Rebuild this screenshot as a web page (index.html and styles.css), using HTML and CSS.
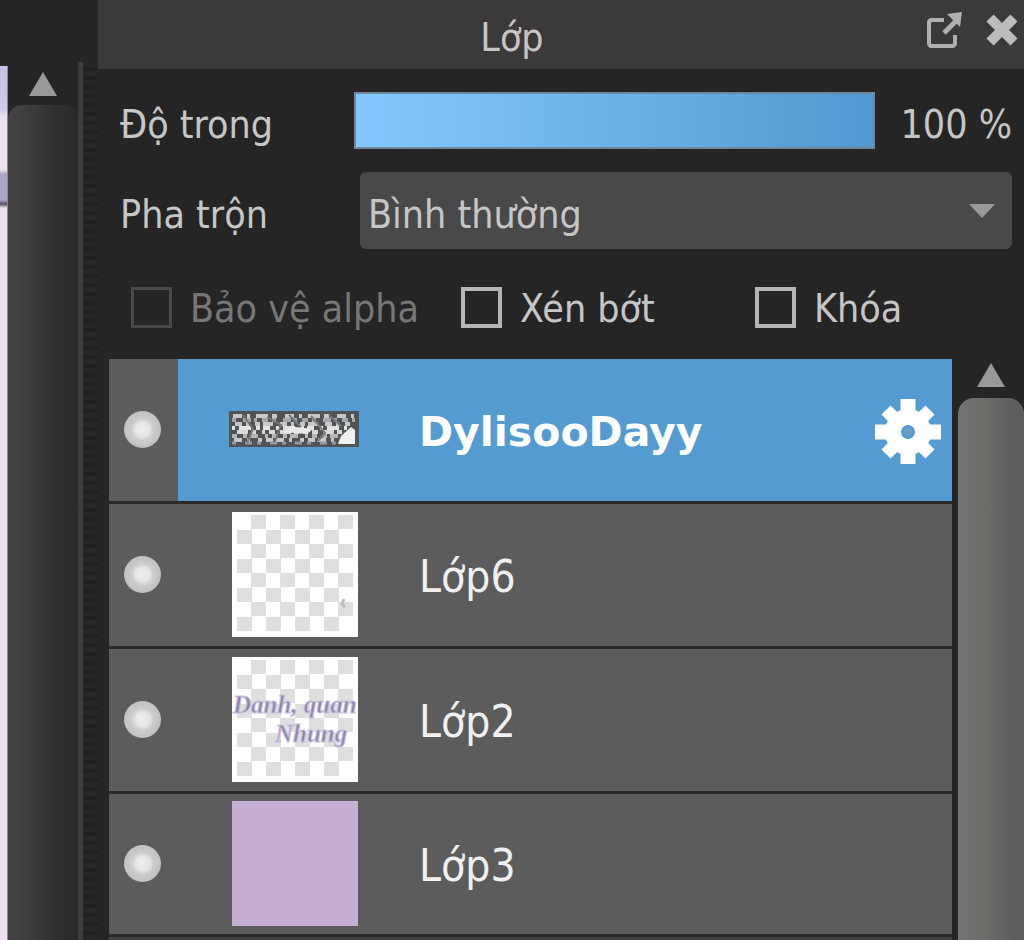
FILE: index.html
```html
<!DOCTYPE html>
<html lang="vi">
<head>
    <meta charset="UTF-8" />
    <meta name="viewport" content="width=device-width, initial-scale=1" />
    <title>Lớp</title>
    <link rel="stylesheet" href="styles.css">
</head>
<body>
<div class="side">
    <div class="canvas-edge"></div>
    <div class="scrollbar dark">
        <span class="arrow-up"></span>
        <div class="thumb"></div>
    </div>
</div>
<div class="splitter"></div>

<main class="panel">
    <header class="panel-header">
        <h1>Lớp</h1>
        <div class="header-buttons">
            <button type="button" class="icon-btn" aria-label="Tách cửa sổ">
                <svg width="40" height="40" viewBox="0 0 40 40">
                    <path d="M20 10 H8 Q5 10 5 13 V33 Q5 36 8 36 H28 Q31 36 31 33 V25" fill="none" stroke="#b0b0b0" stroke-width="4"/>
                    <path d="M20 23 L32 11" stroke="#b0b0b0" stroke-width="5"/>
                    <path d="M23 4 L38 2 L36 17 Z" fill="#b0b0b0"/>
                </svg>
            </button>
            <button type="button" class="icon-btn" aria-label="Đóng">
                <svg width="36" height="40" viewBox="0 0 36 40">
                    <path d="M6 8 L30 32 M30 8 L6 32" stroke="#bcbcbc" stroke-width="10"/>
                </svg>
            </button>
        </div>
    </header>

    <div class="field">
        <label for="opacity">Độ trong</label>
        <input type="range" id="opacity" min="0" max="100" value="100">
        <output for="opacity">100 %</output>
    </div>
    <div class="field">
        <label for="blend">Pha trộn</label>
        <div class="select-wrap">
            <select id="blend">
                <option>Bình thường</option>
            </select>
        </div>
    </div>

    <div class="checks">
        <label class="check disabled"><input type="checkbox" disabled> <span>Bảo vệ alpha</span></label>
        <label class="check"><input type="checkbox"> <span>Xén bớt</span></label>
        <label class="check"><input type="checkbox"> <span>Khóa</span></label>
    </div>

    <div class="layers-area">
        <ul class="layers">
            <li class="layer selected">
                <div class="eye"><input type="checkbox" checked aria-label="Hiện DylisooDayy"></div>
                <div class="layer-body">
                    <div class="preview">
                        <svg width="130" height="36" viewBox="0 0 130 36">
                            <rect width="130" height="36" fill="#4f5459"/>
                            <g fill="none" stroke="#c9c7c5" stroke-width="4">
                                <path d="M4 5 H126" stroke-dasharray="9 5 3 6 12 4 5 8"/>
                                <path d="M3 9 H126" stroke-dasharray="4 7 8 3 3 5 6 4" stroke="#aaa8a6"/>
                                <path d="M6 13 H124" stroke-dasharray="7 4 3 6 5 3 10 7"/>
                                <path d="M3 17 H118" stroke-dasharray="3 4 12 5 4 3 7 6" stroke="#e4e2e0"/>
                                <path d="M8 21 H116" stroke-dasharray="11 3 5 6 3 4 6 5" stroke="#dad8d6"/>
                                <path d="M3 25 H110" stroke-dasharray="5 6 4 3 8 7 3 4" stroke="#b8b6b4"/>
                                <path d="M5 29 H112" stroke-dasharray="8 5 3 8 4 4 7 3"/>
                                <path d="M3 32 H108" stroke-dasharray="4 9 7 5" stroke="#96989a" stroke-width="3"/>
                            </g>
                            <path d="M14 4 L24 18 L18 32 M38 6 L52 14 L46 30 M60 4 L72 16 M82 5 L96 22 L88 31 M100 4 L112 15" fill="none" stroke="#77797b" stroke-width="2"/>
                            <path d="M52 21 L66 16 L84 18 L78 23 Z" fill="#ebe9e7"/>
                            <path d="M112 25 L122 16 L126 19 V33 H109 Z" fill="#efefed"/>
                        </svg>
                    </div>
                    <span class="layer-name">DylisooDayy</span>
                    <button type="button" class="icon-btn" aria-label="Cài đặt lớp">
                        <svg width="68" height="68" viewBox="-34 -36 68 68">
                            <g stroke="#fff" stroke-width="15">
                                <path d="M0 -33 V-12 M0 33 V12 M-33 0 H-12 M33 0 H12"/>
                                <path d="M-22 -22 L-10 -10 M22 22 L10 10 M-22 22 L-10 10 M22 -22 L10 -10" stroke-width="13"/>
                            </g>
                            <circle r="15" fill="none" stroke="#fff" stroke-width="16"/>
                            <circle r="4" fill="#6a9fbd"/>
                        </svg>
                    </button>
                </div>
            </li>
            <li class="layer">
                <div class="eye"><input type="checkbox" checked aria-label="Hiện Lớp6"></div>
                <div class="layer-body">
                    <div class="preview">
                        <div class="thumbnail checker">
                            <svg width="116" height="116" viewBox="5 3 116 116">
                                <path d="M112 87 L110 92 L113 95" fill="none" stroke="#bdbdbd" stroke-width="3"/>
                            </svg>
                        </div>
                    </div>
                    <span class="layer-name">Lớp6</span>
                </div>
            </li>
            <li class="layer">
                <div class="eye"><input type="checkbox" checked aria-label="Hiện Lớp2"></div>
                <div class="layer-body">
                    <div class="preview">
                        <div class="thumbnail checker">
                            <svg class="lettering" width="116" height="116" viewBox="5 3 116 116">
                                <text x="1" y="56">Danh, quan</text>
                                <text x="43" y="85">Nhung</text>
                            </svg>
                        </div>
                    </div>
                    <span class="layer-name">Lớp2</span>
                </div>
            </li>
            <li class="layer">
                <div class="eye"><input type="checkbox" checked aria-label="Hiện Lớp3"></div>
                <div class="layer-body">
                    <div class="preview">
                        <div class="thumbnail lilac"></div>
                    </div>
                    <span class="layer-name">Lớp3</span>
                </div>
            </li>
        </ul>
        <div class="scrollbar light">
            <span class="arrow-up"></span>
            <div class="thumb"></div>
        </div>
    </div>
</main>
</body>
</html>
```
FILE: styles.css
```css
* {
    box-sizing: border-box;
}
body {
    margin: 0;
    height: 100vh;
    overflow: hidden;
    display: flex;
    background: #252525;
    color: #c6c6c6;
    font-family: "DejaVu Sans Condensed", "Noto Sans", sans-serif;
    font-size: 39px;
    line-height: 48px;
}
input, select, button {
    font: inherit;
    color: inherit;
    margin: 0;
}

/* left side: canvas and its scrollbar */
.side {
    display: flex;
    padding-top: 66px;
}
.canvas-edge {
    width: 8px;
    background: linear-gradient(#c9c1e4 0, #cfc8e6 44px, #eae2ee 50px, #eae2ee 104px, #aaa6c4 108px, #aaa6c4 134px, #55516d 138px, #ecdfea 142px);
    border-right: 1px solid #8d8790;
}
.scrollbar {
    display: flex;
    flex-direction: column;
    align-items: center;
}
.arrow-up {
    width: 28px;
    height: 24px;
    background: #999;
    clip-path: polygon(50% 0, 100% 100%, 0 100%);
}
.thumb {
    flex: 1;
    width: 100%;
}
.dark {
    width: 70px;
    padding-top: 6px;
}
.dark .thumb {
    margin-top: 9px;
    border-radius: 14px 14px 0 0;
    background: linear-gradient(90deg, #454444, #3d3d3b 30%, #2f2f2e 70%, #292929);
}
.splitter {
    width: 20px;
    margin-top: 62px;
    border-left: 5px solid #3d3d3d;
    background: repeating-linear-gradient(#272727 0, #272727 5px, #222 5px, #222 9px);
}

/* layer panel */
.panel {
    flex: 1;
    min-width: 0;
    display: flex;
    flex-direction: column;
}
.panel-header {
    display: flex;
    align-items: center;
    height: 69px;
    padding: 6px 4px 0 0;
    background: #3b3939;
    flex-shrink: 0;
}
h1 {
    flex: 1;
    margin: 0;
    padding-left: 2px;
    font-size: 39px;
    font-weight: normal;
    text-align: center;
}
.header-buttons {
    display: flex;
    gap: 20px;
    padding-bottom: 16px;
}
.icon-btn {
    display: flex;
    padding: 0;
    border: none;
    background: none;
    cursor: pointer;
}
.field {
    display: flex;
    align-items: center;
    padding: 0 12px 0 22px;
    margin-top: 23px;
    flex-shrink: 0;
}
.field label {
    width: 234px;
    padding-top: 8px;
}
.field output {
    padding: 8px 0 0 26px;
}
#opacity {
    flex: 1;
    min-width: 0;
    height: 57px;
    appearance: none;
    border: 2px solid #6f8798;
    background: linear-gradient(90deg, #84caff, #5199d0);
}
#opacity::-webkit-slider-thumb {
    appearance: none;
    width: 1px;
    height: 50px;
}
.select-wrap {
    flex: 1;
    display: flex;
    position: relative;
    padding-left: 6px;
}
.select-wrap::after {
    content: "";
    position: absolute;
    right: 17px;
    top: 32px;
    width: 26px;
    height: 14px;
    background: #999;
    clip-path: polygon(0 0, 100% 0, 50% 100%);
    pointer-events: none;
}
select {
    width: 100%;
    height: 77px;
    padding: 8px 8px 0;
    appearance: none;
    border: none;
    border-radius: 6px;
    background: #494949;
}
.checks {
    display: grid;
    grid-template-columns: 330px 294px 1fr;
    padding: 32px 12px 26px 33px;
    flex-shrink: 0;
}
.check {
    display: flex;
    align-items: center;
    gap: 18px;
    height: 52px;
    white-space: nowrap;
}
.check span {
    padding-top: 4px;
}
.check input {
    appearance: none;
    width: 41px;
    height: 41px;
    border: 4px solid #b5b5b5;
}
.check.disabled {
    color: #777;
}
.check.disabled input {
    border: 3px solid #4a4a4a;
}

.layers-area {
    flex: 1;
    min-height: 0;
    display: flex;
    padding-left: 11px;
}
.layers {
    flex: 1;
    margin: 0;
    padding: 0;
    list-style: none;
    background: #454341;
}
.layer {
    display: flex;
    height: 145px;
    border-bottom: 3px solid #2a2a2a;
    background: #5c5c5c;
    color: #f0f0f0;
    font-size: 44px;
}
.eye {
    width: 69px;
    padding: 0 3px 2px 0;
    display: flex;
    align-items: center;
    justify-content: center;
}
.eye input {
    appearance: none;
    width: 37px;
    height: 37px;
    border-radius: 50%;
    background: radial-gradient(circle, #eee 0, #e6e6e6 7px, #cdcdcd 11px, #c2c2c2 17px);
}
.layer-body {
    flex: 1;
    display: flex;
    align-items: center;
    padding: 0 10px 0 51px;
}
.preview {
    width: 190px;
    display: flex;
    padding-bottom: 2px;
}
.layer-name {
    flex: 1;
    padding-top: 4px;
}
.selected .layer-body {
    background: #549bd2;
}
.selected .layer-name {
    color: #fff;
    font-family: "DejaVu Sans", sans-serif;
    font-size: 41px;
    font-weight: bold;
}
.layer:last-child {
    height: 143px;
}
.thumbnail {
    width: 126px;
    height: 125px;
    margin-left: 3px;
}
.checker {
    border: solid #fff;
    border-width: 3px 5px 6px;
    background: repeating-conic-gradient(#dfdfdf 0 25%, #fff 0 50%) 0 0 / 29px 29px;
    background-clip: padding-box;
}
.checker svg {
    display: block;
    overflow: visible;
}
.lilac {
    background: #c5afd3;
}
.lettering {
    font-family: "Liberation Serif", serif;
    font-size: 25px;
    font-style: italic;
    font-weight: bold;
    fill: #8b83ad;
    stroke: #c9c3de;
    stroke-width: 1px;
}
.light {
    width: 66px;
    margin-left: 6px;
    padding-top: 4px;
}
.light .thumb {
    margin-top: 11px;
    border-radius: 16px 16px 0 0;
    background: linear-gradient(90deg, #747472, #6b6a67 50%, #5f5f5f 80%, #5c5c5c);
}
```
